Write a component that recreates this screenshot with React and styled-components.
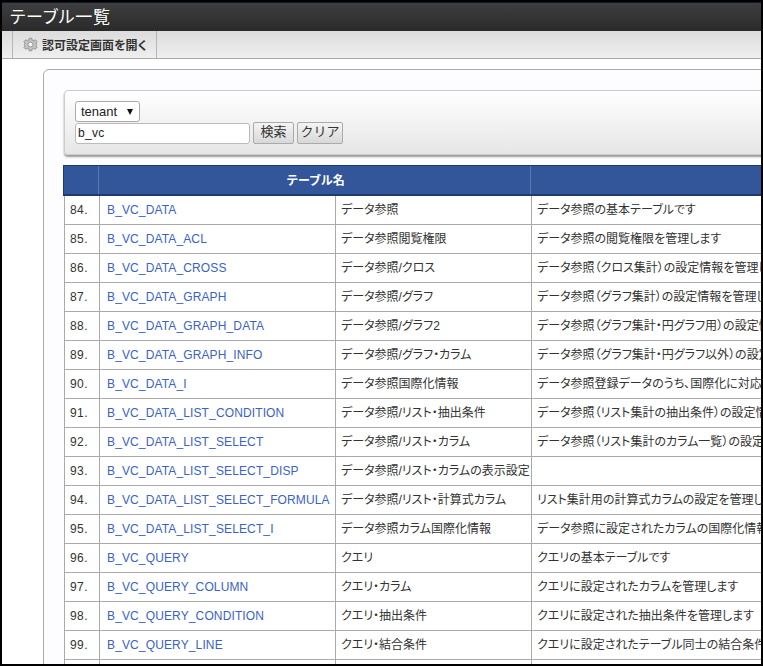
import React from 'react'
import styled, { createGlobalStyle } from 'styled-components'

const rows = [
  ['84.', 'B_VC_DATA', 'データ参照', 'データ参照の基本テーブルです'],
  ['85.', 'B_VC_DATA_ACL', 'データ参照閲覧権限', 'データ参照の閲覧権限を管理します'],
  ['86.', 'B_VC_DATA_CROSS', 'データ参照/クロス', 'データ参照（クロス集計）の設定情報を管理します'],
  ['87.', 'B_VC_DATA_GRAPH', 'データ参照/グラフ', 'データ参照（グラフ集計）の設定情報を管理します'],
  ['88.', 'B_VC_DATA_GRAPH_DATA', 'データ参照/グラフ2', 'データ参照（グラフ集計・円グラフ用）の設定情報を管理します'],
  ['89.', 'B_VC_DATA_GRAPH_INFO', 'データ参照/グラフ・カラム', 'データ参照（グラフ集計・円グラフ以外）の設定情報を管理します'],
  ['90.', 'B_VC_DATA_I', 'データ参照国際化情報', 'データ参照登録データのうち、国際化に対応します'],
  ['91.', 'B_VC_DATA_LIST_CONDITION', 'データ参照/リスト・抽出条件', 'データ参照（リスト集計の抽出条件）の設定情報を管理します'],
  ['92.', 'B_VC_DATA_LIST_SELECT', 'データ参照/リスト・カラム', 'データ参照（リスト集計のカラム一覧）の設定情報を管理します'],
  ['93.', 'B_VC_DATA_LIST_SELECT_DISP', 'データ参照/リスト・カラムの表示設定', ''],
  ['94.', 'B_VC_DATA_LIST_SELECT_FORMULA', 'データ参照/リスト・計算式カラム', 'リスト集計用の計算式カラムの設定を管理します'],
  ['95.', 'B_VC_DATA_LIST_SELECT_I', 'データ参照カラム国際化情報', 'データ参照に設定されたカラムの国際化情報を管理します'],
  ['96.', 'B_VC_QUERY', 'クエリ', 'クエリの基本テーブルです'],
  ['97.', 'B_VC_QUERY_COLUMN', 'クエリ・カラム', 'クエリに設定されたカラムを管理します'],
  ['98.', 'B_VC_QUERY_CONDITION', 'クエリ・抽出条件', 'クエリに設定された抽出条件を管理します'],
  ['99.', 'B_VC_QUERY_LINE', 'クエリ・結合条件', 'クエリに設定されたテーブル同士の結合条件を管理します'],
  ['100.', 'B_VC_QUERY_ORDER', 'クエリ・ソート', ''],
]

const GlobalStyle = createGlobalStyle`
  html, body {
    margin: 0;
    height: 100%;
    overflow: hidden;
    background: #000;
  }
`

const Frame = styled.div`
  width: 763px;
  height: 666px;
  box-sizing: border-box;
  border: 2px solid #000;
  overflow: hidden;
  background: #fff;
  font-family: "Liberation Sans", "Noto Sans CJK JP", sans-serif;
  font-feature-settings: "palt";
  font-size: 12px;
  color: #333;
  display: flex;
  flex-direction: column;
`

const TitleBar = styled.header`
  flex: none;
  height: 29px;
  box-sizing: border-box;
  border-top: 1px solid #0c1a33;
  background: linear-gradient(#3e3e3e, #2a2a2a);
  color: #fff;
  padding-left: 8px;
  font-size: 17px;
  line-height: 29px;
  letter-spacing: 0.8px;
`

const Toolbar = styled.nav`
  flex: none;
  height: 28px;
  box-sizing: border-box;
  display: flex;
  padding-left: 10px;
  border-bottom: 1px solid #aaa;
  background: linear-gradient(#dcdcdc, #efefef);
`

const ToolButton = styled.div`
  display: flex;
  align-items: center;
  gap: 4px;
  padding: 0 10px 1px;
  border-left: 1px solid #b5b5b5;
  border-right: 1px solid #b5b5b5;
  color: #333;
  font-size: 12px;
  font-weight: 700;
`

const Content = styled.main`
  flex: 1;
  min-height: 0;
  padding: 10px 0 0 41px;
  overflow: hidden;
`

const Card = styled.section`
  width: 900px;
  box-sizing: border-box;
  padding: 20px;
  border: 1px solid #aaa;
  border-radius: 6px 0 0 0;
  background: #fdfdff;
`

const SearchPanel = styled.form`
  height: 65px;
  box-sizing: border-box;
  padding: 10px;
  border: 1px solid #ccc;
  border-radius: 4px;
  background: linear-gradient(#fff, #e6e6e6);
  box-shadow: 0 2px 2px #999;
  margin-bottom: 10px;
`

const SelectBox = styled.div`
  width: 65px;
  height: 21px;
  box-sizing: border-box;
  display: flex;
  align-items: center;
  justify-content: space-between;
  padding: 0 6px 0 5px;
  border: 1px solid #aaa;
  border-radius: 3px;
  background: #fff;
  color: #222;
  font-size: 13px;
`

const Caret = styled.span`
  width: 0;
  height: 0;
  border-left: 3.5px solid transparent;
  border-right: 3.5px solid transparent;
  border-top: 6px solid #111;
`

const SearchRow = styled.div`
  display: flex;
  align-items: flex-start;
  gap: 3px;
`

const SearchInput = styled.input`
  width: 175px;
  height: 21px;
  margin-top: 1px;
  box-sizing: border-box;
  padding: 0 2px 2px;
  border: 1px solid #bbb;
  border-radius: 3px;
  background: #fff;
  color: #222;
  font: 12px "Liberation Sans", sans-serif;
  letter-spacing: 0.3px;
`

const Button = styled.button`
  width: ${p => p.$width}px;
  height: 22px;
  padding: 0 0 3px;
  border: 1px solid #aaa;
  border-radius: 2px;
  background: linear-gradient(#f4f4f4, #d8d8d8);
  color: #333;
  font: 13px/16px "Liberation Sans", "Noto Sans CJK JP", sans-serif;
`

const Table = styled.table`
  width: 836px;
  table-layout: fixed;
  border-collapse: separate;
  border-spacing: 0;
`

const HeadCell = styled.th`
  height: 31px;
  box-sizing: border-box;
  padding: 0 0 1px;
  border-top: 1px solid #1f3a70;
  border-bottom: 2px solid #1f3a70;
  background: #33559a;
  box-shadow: inset -1px 0 0 #33559a, inset -2px 0 0 #5b7bb5;
  color: #fff;
  font-size: 12px;
  font-weight: 700;
  letter-spacing: 0.3px;
  text-align: center;

  &:first-child {
    box-shadow: inset -1px 0 0 #33559a, inset -2px 0 0 #5b7bb5, -1px 0 0 #1f3a70;
  }
`

const Cell = styled.td`
  height: 29px;
  box-sizing: border-box;
  padding: 0 4px 0 7px;
  border-right: 1px solid #aaa;
  border-bottom: 1px solid #aaa;
  background: #fff;
  line-height: 14px;
  white-space: nowrap;
  overflow: hidden;
`

const TextCell = styled(Cell)`
  padding: 0 0 1px 5px;
`

const NumberCell = styled(Cell)`
  padding-left: 5px;
  border-left: 1px solid #aaa;
  letter-spacing: 0.4px;
`

const NameLink = styled.a`
  color: #3a62c8;
  text-decoration: none;
  letter-spacing: 0.13px;
`

const Gear = () => (
  <svg width="15" height="15" viewBox="0 0 24 24" fill="#c4c4c4" stroke="#8f8f8f" strokeWidth="1.5">
    <path d="M10 2h4l.7 3 2.3 1 2.6-1.600 2.800 2.800L20.800 9.800l1 2.200-1 2.200 1.600 2.600-2.800 2.800L17 18l-2.300 1-.7 3h-4l-.7-3L7 18l-2.600 1.600-2.800-2.800 1.600-2.600-1-2.200 1-2.200-1.600-2.600 2.800-2.800L7 6l2.300-1z" />
    <circle cx="12" cy="12" r="4" fill="#f2f2f2" />
  </svg>
)

export default function App() {
  return (
    <>
      <GlobalStyle />
      <Frame>
        <TitleBar>テーブル一覧</TitleBar>
        <Toolbar>
          <ToolButton><Gear />認可設定画面を開く</ToolButton>
        </Toolbar>
        <Content>
          <Card>
            <SearchPanel>
              <SelectBox>tenant<Caret /></SelectBox>
              <SearchRow>
                <SearchInput defaultValue="b_vc" />
                <Button type="button" $width={41}>検索</Button>
                <Button type="button" $width={46}>クリア</Button>
              </SearchRow>
            </SearchPanel>
            <Table>
              <colgroup>
                <col width="36" />
                <col width="236" />
                <col width="196" />
                <col />
              </colgroup>
              <thead>
                <tr>
                  <HeadCell />
                  <HeadCell colSpan={2}>テーブル名</HeadCell>
                  <HeadCell />
                </tr>
              </thead>
              <tbody>
                {rows.map(r => (
                  <tr key={r[0]}>
                    <NumberCell>{r[0]}</NumberCell>
                    <Cell><NameLink href="#">{r[1]}</NameLink></Cell>
                    <TextCell>{r[2]}</TextCell>
                    <TextCell>{r[3]}</TextCell>
                  </tr>
                ))}
              </tbody>
            </Table>
          </Card>
        </Content>
      </Frame>
    </>
  )
}
